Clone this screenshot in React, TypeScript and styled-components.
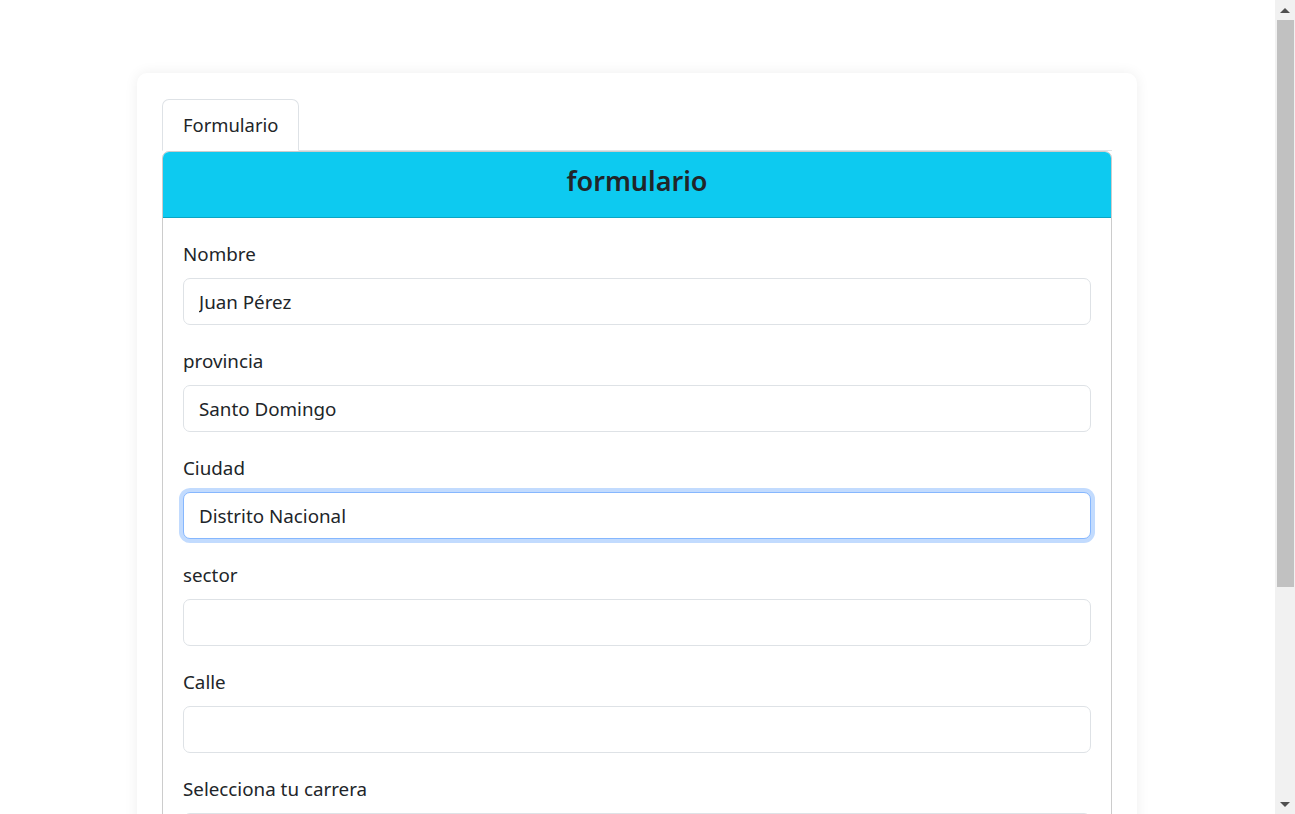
import React from 'react';
import styled, { createGlobalStyle } from 'styled-components';

const GlobalStyle = createGlobalStyle`
  html, body {
    margin: 0;
    padding: 0;
    background: #ffffff;
  }
  body {
    font-family: "Noto Sans", "Open Sans", sans-serif;
    font-size: 18.8px;
    line-height: 1.5;
    color: #212529;
  }
  * {
    box-sizing: border-box;
  }
`;

const Page = styled.main`
  padding: 73px 0 134px 137px;
`;

const Shell = styled.section`
  width: 1000px;
  background: #ffffff;
  border-radius: 10px;
  box-shadow: 0 0 14px rgba(0, 0, 0, 0.07);
  padding: 26px 25px 25px;
`;

const TabList = styled.ul`
  display: flex;
  list-style: none;
  margin: 0;
  padding: 0;
  border-bottom: 1px solid #dee2e6;
`;

const Tab = styled.li<{ $active?: boolean }>`
  margin-bottom: -1px;
  padding: 10px 20px;
  border: 1px solid ${(p) => (p.$active ? '#dee2e6' : 'transparent')};
  border-bottom-color: ${(p) => (p.$active ? '#ffffff' : 'transparent')};
  border-radius: 7px 7px 0 0;
  background: #ffffff;
  color: #212529;
  font-size: 18.4px;
  line-height: 30px;
`;

const Card = styled.div`
  border: 1px solid rgba(0, 0, 0, 0.2);
  border-radius: 7px;
  overflow: hidden;
`;

const CardHeader = styled.div`
  background: #0dcaf0;
  border-bottom: 1px solid rgba(0, 0, 0, 0.18);
  padding: 11px 20px 10px;
  text-align: center;
`;

const Title = styled.h4`
  margin: 0 0 8px;
  font-size: 27px;
  font-weight: 600;
  line-height: 36px;
  color: #212529;
`;

const CardBody = styled.form`
  padding: 21px 20px 20px;
`;

const Field = styled.div`
  margin-bottom: 21px;
`;

const Label = styled.label`
  display: block;
  margin-bottom: 9px;
  line-height: 30px;
`;

const Input = styled.input<{ $focused?: boolean }>`
  display: block;
  width: 100%;
  height: 47px;
  padding: 7px 15px;
  font: inherit;
  color: #212529;
  background: #ffffff;
  border: 1px solid ${(p) => (p.$focused ? '#86b7fe' : '#dee2e6')};
  border-radius: 7px;
  outline: none;
  box-shadow: ${(p) => (p.$focused ? '0 0 0 4px rgba(13, 110, 253, 0.25)' : 'none')};
`;

const Select = styled.select`
  display: block;
  width: 100%;
  height: 47px;
  padding: 7px 15px;
  font: inherit;
  color: #212529;
  background: #ffffff;
  border: 1px solid #dee2e6;
  border-radius: 7px;
`;

const Submit = styled.button`
  font: inherit;
  color: #ffffff;
  background: #0d6efd;
  border: 1px solid #0d6efd;
  border-radius: 7px;
  padding: 7px 15px;
`;

/* window scrollbar, drawn over the page's right edge */
const ScrollTrack = styled.div`
  position: fixed;
  top: 0;
  right: 0;
  bottom: 0;
  width: 20px;
  background: #f1f1f1;
  display: flex;
  flex-direction: column;
  align-items: center;
`;

const ScrollArrow = styled.div<{ $down?: boolean }>`
  height: 20px;
  width: 100%;
  display: flex;
  align-items: center;
  justify-content: center;

  &::after {
    content: '';
    border-left: 5px solid transparent;
    border-right: 5px solid transparent;
    ${(p) =>
      p.$down ? 'border-top: 5px solid #505050;' : 'border-bottom: 5px solid #505050;'}
  }
`;

const ScrollThumb = styled.div`
  width: 17px;
  height: 567px;
  background: #c1c1c1;
`;

const ScrollRest = styled.div`
  flex: 1;
`;

const fields = [
  { label: 'Nombre', value: 'Juan Pérez' },
  { label: 'provincia', value: 'Santo Domingo' },
  { label: 'Ciudad', value: 'Distrito Nacional', focused: true },
  { label: 'sector', value: '' },
  { label: 'Calle', value: '' },
];

const App: React.FC = () => {
  return (
    <>
      <GlobalStyle />
      <Page>
        <Shell>
          <TabList>
            <Tab $active>Formulario</Tab>
          </TabList>
          <Card>
            <CardHeader>
              <Title>formulario</Title>
            </CardHeader>
            <CardBody onSubmit={(e) => e.preventDefault()}>
              {fields.map((f) => (
                <Field key={f.label}>
                  <Label>{f.label}</Label>
                  <Input defaultValue={f.value} $focused={f.focused} />
                </Field>
              ))}
              <Field>
                <Label>Selecciona tu carrera</Label>
                <Select defaultValue="">
                  <option value="">Selecciona...</option>
                  <option>Ingeniería de Software</option>
                  <option>Medicina</option>
                  <option>Derecho</option>
                </Select>
              </Field>
              <Submit type="submit">Enviar</Submit>
            </CardBody>
          </Card>
        </Shell>
      </Page>
      <ScrollTrack aria-hidden>
        <ScrollArrow />
        <ScrollThumb />
        <ScrollRest />
        <ScrollArrow $down />
      </ScrollTrack>
    </>
  );
};

export default App;
